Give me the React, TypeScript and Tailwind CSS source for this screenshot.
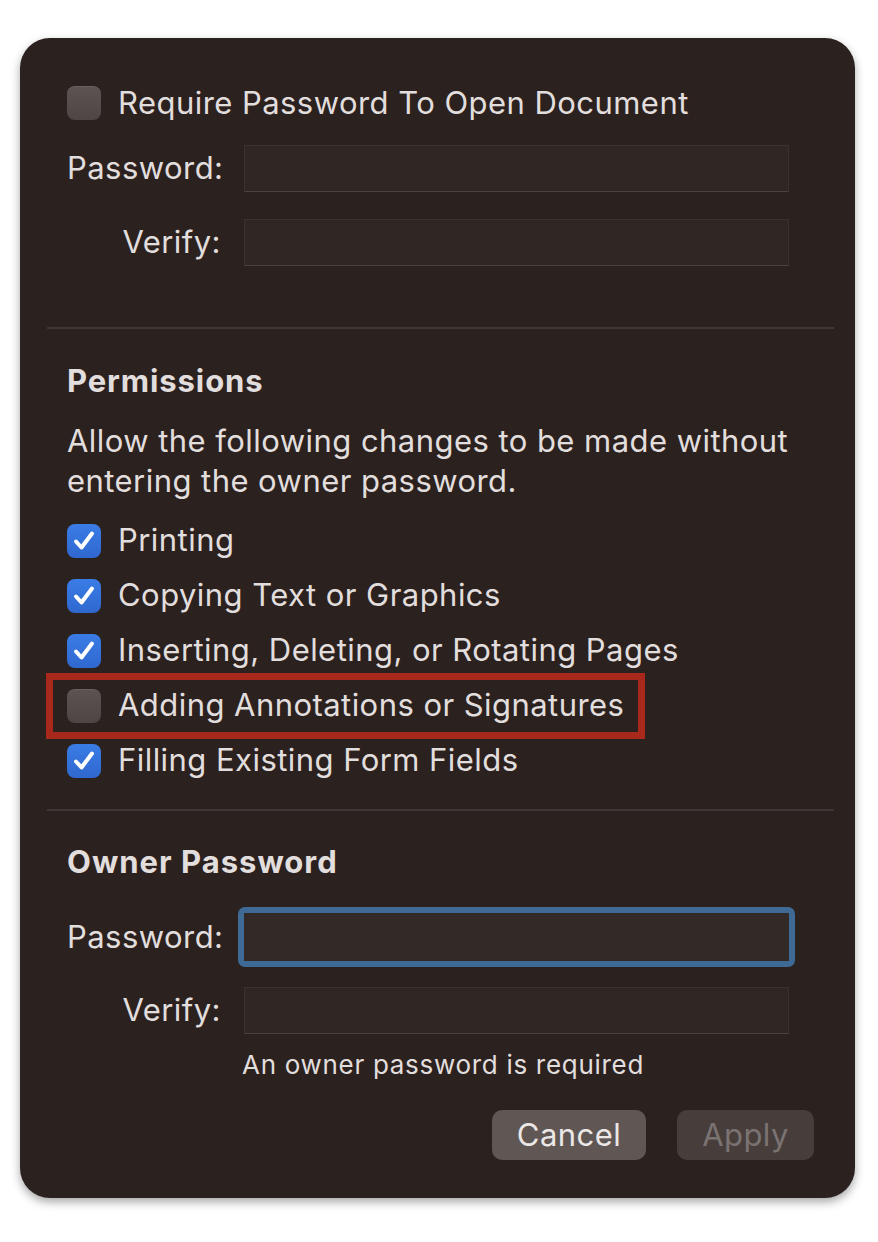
import { useState } from "react";

const FONT = { fontFamily: "Inter, 'Noto Sans', 'Liberation Sans', sans-serif" };

function CheckBox({ checked }: { checked: boolean }) {
  if (!checked) {
    return (
      <div className="w-[34px] h-[34px] shrink-0 rounded-[8px] bg-gradient-to-b from-[#5c5452] to-[#4e4644] shadow-[inset_0_1px_0_rgba(255,255,255,0.08)]" />
    );
  }
  return (
    <div className="w-[34px] h-[34px] shrink-0 rounded-[8px] bg-gradient-to-b from-[#3a7ce6] to-[#2f68cf] flex items-center justify-center">
      <svg width="28" height="28" viewBox="0 0 28 28" fill="none">
        <path
          d="M6 14.5 L11.5 20.5 L22 6.5"
          stroke="white"
          strokeWidth="4"
          strokeLinecap="round"
          strokeLinejoin="round"
        />
      </svg>
    </div>
  );
}

function Field({ label, focused }: { label: string; focused?: boolean }) {
  return (
    <div className="flex items-center">
      <div className="w-[154px] text-right text-[31px] tracking-[0.45px] text-[#e2dedd] shrink-0 whitespace-nowrap">
        {label}
      </div>
      <div className="ml-[23px] flex-1">
        {focused ? (
          <div className="-mx-[6px] -my-[6px] rounded-[7px] border-[6px] border-[#3e6a95]">
            <div className="h-[48px] bg-[#332a28]" />
          </div>
        ) : (
          <div className="h-[47px] bg-[#302725] border border-[#3a3230] border-b-[#4a4240]" />
        )}
      </div>
    </div>
  );
}

const permissions = [
  { label: "Printing", checked: true },
  { label: "Copying Text or Graphics", checked: true },
  { label: "Inserting, Deleting, or Rotating Pages", checked: true },
  { label: "Adding Annotations or Signatures", checked: false, highlight: true },
  { label: "Filling Existing Form Fields", checked: true },
];

export default function App() {
  const [perms] = useState(permissions);

  return (
    <div className="min-h-screen bg-white pt-[38px] pl-[20px]" style={FONT}>
      <div className="w-[835px] h-[1160px] rounded-[30px] bg-[#2b2220] shadow-[0_4px_10px_rgba(0,0,0,0.35)] text-[#e2dedd] flex flex-col tracking-[0.45px]">
        {/* Open password */}
        <div className="pl-[47px] pr-[66px] pt-[45px]">
          <div className="h-[40px] flex items-center gap-[17px]">
            <CheckBox checked={false} />
            <span className="text-[31px]">Require Password To Open Document</span>
          </div>
          <div className="mt-[22px]">
            <Field label="Password:" />
          </div>
          <div className="mt-[27px]">
            <Field label="Verify:" />
          </div>
        </div>

        <div className="ml-[27px] mr-[21px] mt-[61px] h-[2px] bg-[#3f3735]" />

        {/* Permissions */}
        <div className="pl-[47px] pr-[20px] pt-[32px]">
          <div className="h-[40px] flex items-center text-[31px] font-bold tracking-[0.9px]">Permissions</div>
          <p className="mt-[20px] text-[31px] leading-[40px] whitespace-nowrap">
            Allow the following changes to be made without
            <br />
            entering the owner password.
          </p>
          <div className="mt-[12px] flex flex-col">
            {perms.map((p) => (
              <div key={p.label} className="h-[55px] flex items-center">
                <div
                  className={
                    p.highlight
                      ? "-ml-[21px] pl-[14px] pr-[14px] h-[66px] flex items-center gap-[17px] border-[7px] border-[#a8291b]"
                      : "flex items-center gap-[17px]"
                  }
                >
                  <CheckBox checked={p.checked} />
                  <span className="text-[31px] whitespace-nowrap">{p.label}</span>
                </div>
              </div>
            ))}
          </div>
        </div>

        <div className="ml-[27px] mr-[21px] mt-[21px] h-[2px] bg-[#3f3735]" />

        {/* Owner password */}
        <div className="pl-[47px] pr-[66px] pt-[31px]">
          <div className="h-[40px] flex items-center text-[31px] font-bold tracking-[1px]">Owner Password</div>
          <div className="mt-[31px]">
            <Field label="Password:" focused />
          </div>
          <div className="mt-[26px]">
            <Field label="Verify:" />
          </div>
          <div className="ml-[175px] mt-[12px] h-[36px] flex items-center text-[26px] tracking-[0.7px]">
            An owner password is required
          </div>
        </div>

        <div className="flex justify-end gap-[31px] pr-[41px] mt-[28px]">
          <button className="w-[154px] h-[50px] rounded-[10px] bg-[#605755] text-[31px] text-[#ebe7e6]">
            Cancel
          </button>
          <button className="w-[137px] h-[50px] rounded-[10px] bg-[#473e3c] text-[31px] text-[#7b7371]">
            Apply
          </button>
        </div>
      </div>
    </div>
  );
}
